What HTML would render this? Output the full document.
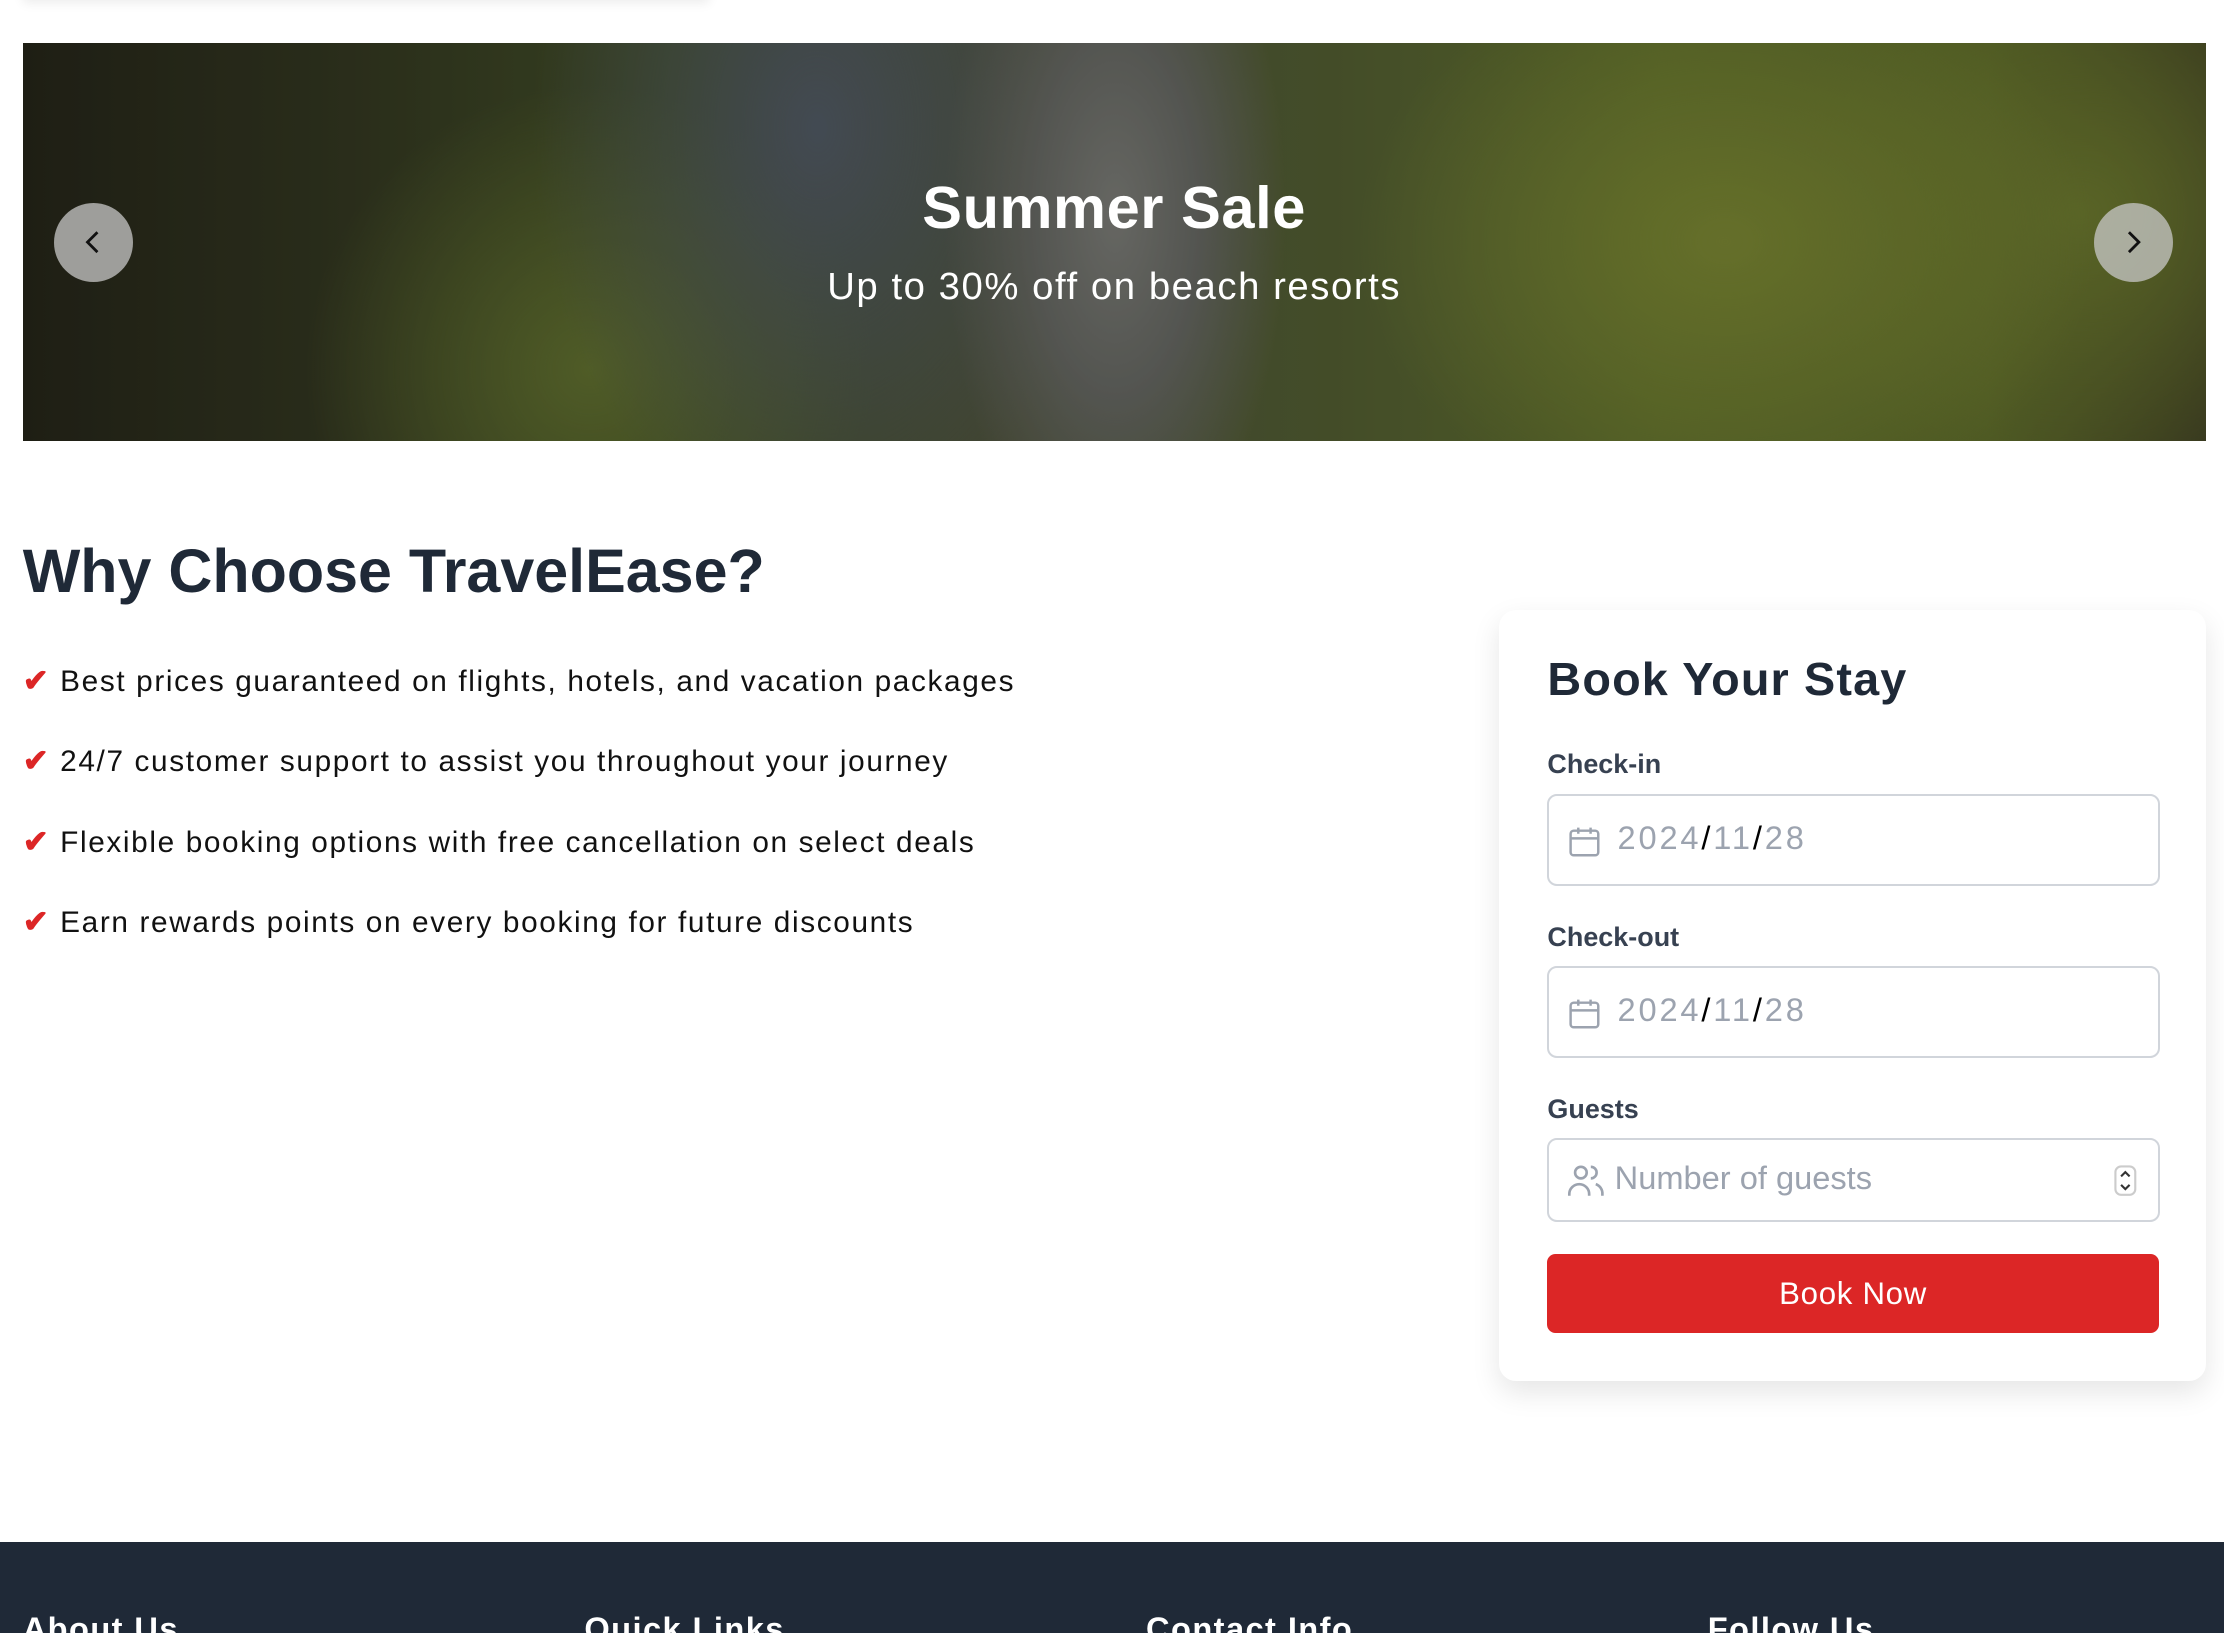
<!DOCTYPE html>
<html><head><meta charset="utf-8">
<style>
html,body{margin:0;padding:0;background:#fff;overflow:hidden}
body{width:1568px;height:1151px;zoom:1.41837;position:relative;font-family:"Liberation Sans",Arial,sans-serif;color:#111827}
.topbox{position:absolute;left:16px;top:-20px;width:484px;height:20px;box-shadow:0 2px 8px rgba(0,0,0,.08);background:#fff}
.hero{position:absolute;left:16px;top:30px;width:1539px;height:281px;overflow:hidden;
background:
linear-gradient(rgba(0,0,0,.28),rgba(0,0,0,.28)),
radial-gradient(ellipse 120px 260px at 770px 120px,#8d8e88 0%,#73756f 50%,rgba(90,95,80,0) 100%),
radial-gradient(ellipse 200px 300px at 560px 60px,#5c6672 0%,rgba(70,80,70,0) 100%),
radial-gradient(ellipse 260px 200px at 1200px 140px,#8c9a3a 0%,rgba(100,120,40,0) 100%),
radial-gradient(ellipse 220px 200px at 1450px 120px,#7b8a34 0%,rgba(100,120,40,0) 100%),
radial-gradient(ellipse 200px 200px at 400px 230px,#6e7f35 0%,rgba(80,90,40,0) 100%),
linear-gradient(90deg,#2a2a1c 0%,#3a3f25 15%,#4b5a2c 30%,#5a5f45 45%,#5d6a38 60%,#6d7f32 75%,#6a7a30 90%,#4a4a2a 100%);}
.hero h1{position:absolute;left:0;right:0;top:92px;margin:0;text-align:center;color:#fff;font-size:42px;font-weight:700;letter-spacing:.4px}
.hero p{position:absolute;left:0;right:0;top:157px;margin:0;text-align:center;color:#fff;font-size:27px;letter-spacing:1.1px}
.arrow{position:absolute;top:113px;width:56px;height:56px;border-radius:50%;background:rgba(200,200,200,.75)}
.arrow svg{position:absolute;left:18px;top:18px}
h2{position:absolute;left:16px;top:378px;margin:0;font-size:43px;font-weight:700;color:#1f2937}
ul{position:absolute;left:16px;top:462px;margin:0;padding:0;list-style:none}
li{font-size:21px;height:56.5px;line-height:36px;color:#111;letter-spacing:1.15px}
li b{color:#dc2626;margin-right:8px;font-size:22px;letter-spacing:0}
.card{position:absolute;left:1057px;top:430px;width:498px;height:544px;background:#fff;border-radius:12px;box-shadow:0 8px 20px rgba(0,0,0,.1)}
.card h3{position:absolute;left:34px;top:30px;margin:0;font-size:33px;font-weight:700;color:#1f2937;letter-spacing:.8px}
.lab{position:absolute;left:34px;font-size:19px;color:#374151;font-weight:600}
.inp{position:absolute;left:34px;width:429px;border:1.5px solid #d1d5db;border-radius:7px;background:#fff}
.inp .t{position:absolute;left:48px;font-size:23px;color:#9ca3af}
.inp .t.d{letter-spacing:2px}
.inp .t i{font-style:normal;color:#000}
.inp svg{position:absolute;left:12px}
.btn{position:absolute;left:34px;top:454px;width:431px;height:56px;background:#dc2626;border-radius:6px;color:#fff;font-size:22px;text-align:center;line-height:56px;letter-spacing:.5px}
footer{position:absolute;left:0;top:1087px;width:1568px;height:64px;background:#1f2937}
footer div{position:absolute;top:48px;color:#fff;font-size:23px;font-weight:700;letter-spacing:1px}
</style></head><body>
<div class="topbox"></div>
<div class="hero">
<h1>Summer Sale</h1>
<p>Up to 30% off on beach resorts</p>
<div class="arrow" style="left:22px"><svg width="20" height="20" viewBox="0 0 20 20"><path d="M13 3L6 10l7 7" fill="none" stroke="#111" stroke-width="2"/></svg></div>
<div class="arrow" style="left:1460px"><svg width="20" height="20" viewBox="0 0 20 20"><path d="M7 3l7 7-7 7" fill="none" stroke="#111" stroke-width="2"/></svg></div>
</div>
<h2>Why Choose TravelEase?</h2>
<ul>
<li><b>✔</b>Best prices guaranteed on flights, hotels, and vacation packages</li>
<li><b>✔</b>24/7 customer support to assist you throughout your journey</li>
<li><b>✔</b>Flexible booking options with free cancellation on select deals</li>
<li><b>✔</b>Earn rewards points on every booking for future discounts</li>
</ul>
<div class="card">
<h3>Book Your Stay</h3>
<div class="lab" style="top:98px">Check-in</div>
<div class="inp" style="top:130px;height:62px">
<svg style="top:19px" width="26" height="26" viewBox="0 0 24 24" fill="none" stroke="#9ca3af" stroke-width="1.6"><rect x="3" y="5" width="18" height="16" rx="2"/><path d="M3 10h18M8 3v4M16 3v4"/></svg>
<span class="t d" style="top:16px">2024<i>/</i>11<i>/</i>28</span></div>
<div class="lab" style="top:220px">Check-out</div>
<div class="inp" style="top:251px;height:62px">
<svg style="top:19px" width="26" height="26" viewBox="0 0 24 24" fill="none" stroke="#9ca3af" stroke-width="1.6"><rect x="3" y="5" width="18" height="16" rx="2"/><path d="M3 10h18M8 3v4M16 3v4"/></svg>
<span class="t d" style="top:16px">2024<i>/</i>11<i>/</i>28</span></div>
<div class="lab" style="top:341px">Guests</div>
<div class="inp" style="top:372px;height:57px">
<svg style="top:15px" width="28" height="28" viewBox="0 0 24 24" fill="none" stroke="#9ca3af" stroke-width="1.6"><circle cx="9" cy="7" r="3.5"/><path d="M2 21v-1a6 6 0 0 1 12 0v1M15 3.5a3.5 3.5 0 0 1 0 7M18 14a6 6 0 0 1 4 6v1"/></svg>
<span class="t" style="top:14px;left:46px">Number of guests</span>
<svg style="left:398px;top:18px" width="16" height="22" viewBox="0 0 16 22" fill="none" stroke="#333" stroke-width="1.5"><rect x="1" y="1" width="14" height="20" rx="4" stroke="#ccc"/><path d="M5 8l3-3 3 3M5 14l3 3 3-3"/></svg>
</div>
<div class="btn">Book Now</div>
</div>
<footer>
<div style="left:16px">About Us</div>
<div style="left:412px">Quick Links</div>
<div style="left:808px">Contact Info</div>
<div style="left:1204px">Follow Us</div>
</footer>
</body></html>
